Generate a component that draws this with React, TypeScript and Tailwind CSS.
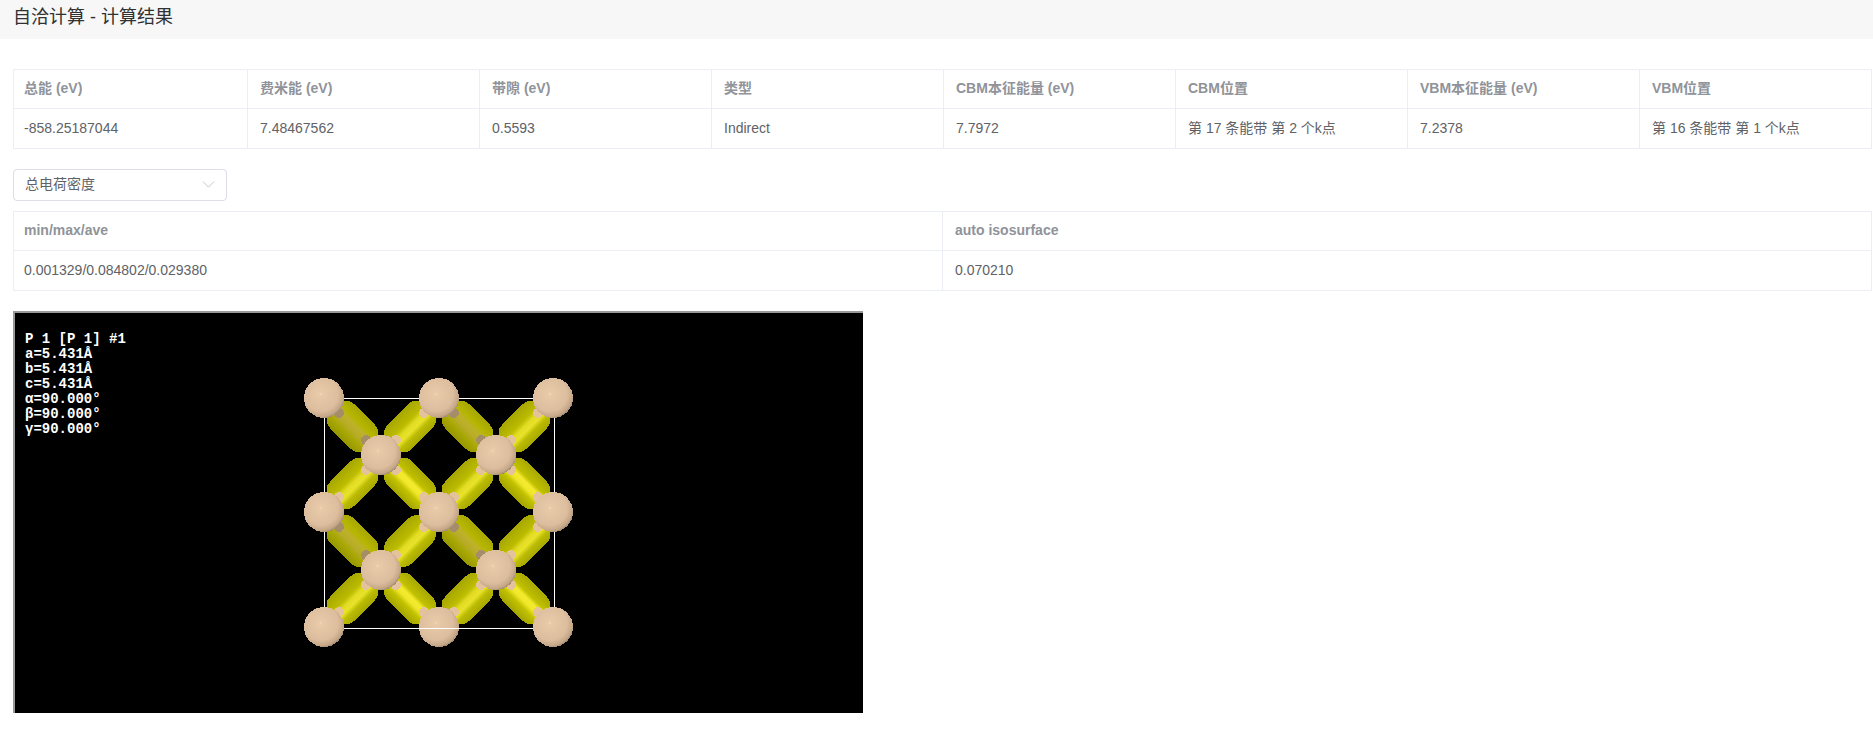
import { type FC } from "react";
import { ChevronDown } from "lucide-react";

const FONT = "font-['Liberation_Sans','Noto_Sans_CJK_SC',sans-serif]";

const energyHead = ["总能 (eV)", "费米能 (eV)", "带隙 (eV)", "类型", "CBM本征能量 (eV)", "CBM位置", "VBM本征能量 (eV)", "VBM位置"];
const energyRow = ["-858.25187044", "7.48467562", "0.5593", "Indirect", "7.7972", "第 17 条能带 第 2 个k点", "7.2378", "第 16 条能带 第 1 个k点"];
const densityHead = ["min/max/ave", "auto isosurface"];
const densityRow = ["0.001329/0.084802/0.029380", "0.070210"];
const cellInfo = ["P 1 [P 1] #1", "a=5.431Å", "b=5.431Å", "c=5.431Å", "α=90.000°", "β=90.000°", "γ=90.000°"];

const DataTable: FC<{ head: string[]; row: string[]; firstCol: string }> = ({ head, row, firstCol }) => (
    <table className="w-full table-fixed border-collapse text-sm">
        <colgroup>
            <col className={firstCol} />
        </colgroup>
        <thead>
            <tr>
                {head.map((h) => (
                    <th key={h} className="h-[39px] border border-[#ebeef5] px-3 pb-[2px] text-left font-bold text-[#909399] first:pl-[10px]">
                        {h}
                    </th>
                ))}
            </tr>
        </thead>
        <tbody>
            <tr>
                {row.map((c) => (
                    <td key={c} className="h-10 border border-[#ebeef5] px-3 pb-[2px] text-[#606266] first:pl-[10px]">
                        {c}
                    </td>
                ))}
            </tr>
        </tbody>
    </table>
);

// atom positions, in page coordinates as read off the reference
const xs = [324, 439, 553];
const ys = [398, 512, 627];
const innerXs = [381, 496];
const innerYs = [455, 570];

type Kind = "dim" | "bright" | "hot";
type Lobe = { x1: number; y1: number; x2: number; y2: number; kind: Kind };

const lobes: Lobe[] = [];
innerYs.forEach((iy, r) => {
    innerXs.forEach((ix, c) => {
        lobes.push({ x1: xs[c], y1: ys[r], x2: ix, y2: iy, kind: "dim" });
        lobes.push({ x1: ix, y1: iy, x2: xs[c + 1], y2: ys[r], kind: "bright" });
        lobes.push({ x1: xs[c], y1: ys[r + 1], x2: ix, y2: iy, kind: "bright" });
        lobes.push({ x1: ix, y1: iy, x2: xs[c + 1], y2: ys[r + 1], kind: "hot" });
    });
});

const atoms: [number, number][] = [
    ...ys.flatMap((y) => xs.map((x) => [x, y] as [number, number])),
    ...innerYs.flatMap((y) => innerXs.map((x) => [x, y] as [number, number])),
];

const Structure: FC = () => (
    <svg viewBox="15 313 848 400" width={848} height={400} className="block" shapeRendering="crispEdges">
        <defs>
            <linearGradient id="lobe-dim" x1="0" y1="0" x2="0" y2="1">
                <stop offset="0" stopColor="#a6a600" />
                <stop offset="0.28" stopColor="#b6b600" />
                <stop offset="0.42" stopColor="#bdb228" />
                <stop offset="0.6" stopColor="#b8ac28" />
                <stop offset="0.76" stopColor="#a8a804" />
                <stop offset="1" stopColor="#979700" />
            </linearGradient>
            <linearGradient id="lobe-bright" x1="0" y1="0" x2="0" y2="1">
                <stop offset="0" stopColor="#a6a600" />
                <stop offset="0.36" stopColor="#bcbc00" />
                <stop offset="0.5" stopColor="#e2dc24" />
                <stop offset="0.64" stopColor="#e8e22a" />
                <stop offset="0.78" stopColor="#bcbc04" />
                <stop offset="1" stopColor="#a8a800" />
            </linearGradient>
            <linearGradient id="lobe-hot" x1="0" y1="0" x2="0" y2="1">
                <stop offset="0" stopColor="#a8a800" />
                <stop offset="0.32" stopColor="#c0c000" />
                <stop offset="0.44" stopColor="#f4ea2e" />
                <stop offset="0.58" stopColor="#f0e62a" />
                <stop offset="0.72" stopColor="#c2c200" />
                <stop offset="1" stopColor="#a4a400" />
            </linearGradient>
            <radialGradient id="atom" cx="0.42" cy="0.4" r="0.62">
                <stop offset="0" stopColor="#f4d9b8" />
                <stop offset="0.07" stopColor="#e8c9a8" />
                <stop offset="0.7" stopColor="#dcbd9d" />
                <stop offset="0.92" stopColor="#c4a788" />
                <stop offset="1" stopColor="#a08a70" />
            </radialGradient>
        </defs>

        <rect x="324.5" y="398" width="229.5" height="230" fill="none" stroke="#ffffff" strokeWidth="1" />

        {lobes.map((l, i) => {
            const mx = (l.x1 + l.x2) / 2;
            const my = (l.y1 + l.y2) / 2;
            const angle = l.y2 > l.y1 ? 45 : -45;
            return (
                <rect
                    key={i}
                    x={-26}
                    y={-17}
                    width={52}
                    height={34}
                    rx={11}
                    fill={`url(#lobe-${l.kind})`}
                    transform={`translate(${mx} ${my}) rotate(${angle})`}
                />
            );
        })}

        {lobes.flatMap((l, i) => {
            const ux = Math.sign(l.x2 - l.x1) * 0.7071;
            const uy = Math.sign(l.y2 - l.y1) * 0.7071;
            const fill = l.kind === "dim" ? "#a58d68" : "#e4c29c";
            return [
                <circle key={`a${i}`} cx={l.x1 + ux * 21} cy={l.y1 + uy * 21} r={5} fill={fill} />,
                <circle key={`b${i}`} cx={l.x2 - ux * 21} cy={l.y2 - uy * 21} r={5} fill={fill} />,
            ];
        })}

        {atoms.map(([x, y]) => (
            <circle key={`${x}-${y}`} cx={x} cy={y} r={20} fill="url(#atom)" />
        ))}

        {/* the cell edge runs in front of the bottom middle atom */}
        <line x1="419" y1="628.5" x2="459" y2="628.5" stroke="#ffffff" strokeWidth="1" />
    </svg>
);

export default function App() {
    return (
        <div className={`${FONT} min-h-[737px] bg-white`}>
            <div className="flex h-[39px] items-start bg-[#f7f7f7] pl-[13px] text-lg leading-[34px] text-[#303133]">
                自洽计算 - 计算结果
            </div>
            <div className="pl-[13px] pr-[1px] pt-[30px]">
                <DataTable head={energyHead} row={energyRow} firstCol="w-[234px]" />
                <div className="mt-5 flex h-8 w-[214px] items-center justify-between rounded border border-[#dcdfe6] pb-[2px] pl-[11px] pr-[7px] text-sm text-[#606266]">
                    <span>总电荷密度</span>
                    <ChevronDown size={21} strokeWidth={1.1} className="text-[#c0c4cc]" />
                </div>
                <div className="mt-[10px]">
                    <DataTable head={densityHead} row={densityRow} firstCol="w-[929px]" />
                </div>
                <div className="relative mt-5 w-[850px] border-l-2 border-t-2 border-[#999999] bg-black">
                    <Structure />
                    <div className="absolute left-[10px] top-[19px] whitespace-pre font-['Liberation_Mono',monospace] text-sm font-bold leading-[15px] text-white">
                        {cellInfo.map((line) => (
                            <div key={line}>{line}</div>
                        ))}
                    </div>
                </div>
            </div>
        </div>
    );
}
